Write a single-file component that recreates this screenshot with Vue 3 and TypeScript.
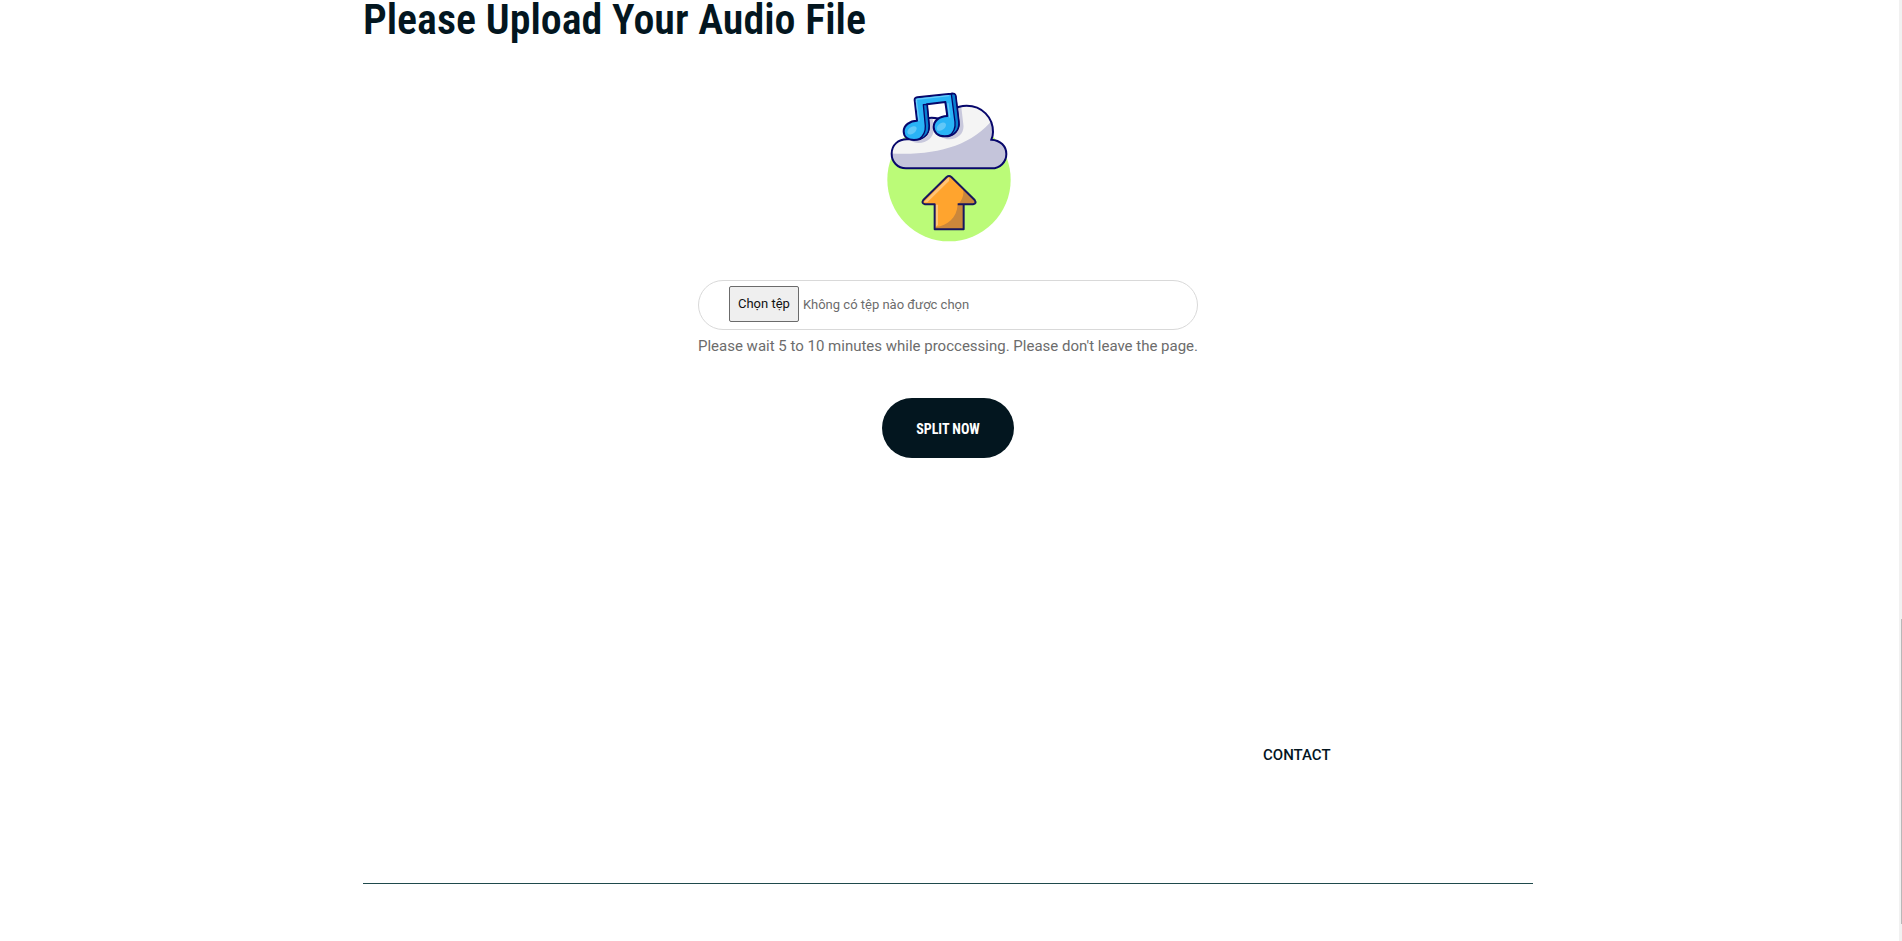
<script setup lang="ts">
import { ref } from 'vue'

const fileName = ref<string>('Không có tệp nào được chọn')

function onPick(event: Event): void {
  const input = event.target as HTMLInputElement
  fileName.value = input.files?.[0]?.name ?? 'Không có tệp nào được chọn'
}
</script>

<template>
  <div class="page">
    <div class="content">
      <main class="container upload">
        <h1 class="title">Please Upload Your Audio File</h1>
        <form class="form" @submit.prevent>
          <svg class="art" viewBox="-6 0 480 510" aria-hidden="true">
            <circle cx="237" cy="299" r="185" fill="#bbfb78" />
            <clipPath id="cloud">
              <path d="M108 265 C82 265 65 245 65 221 C65 194 85 178 111 178 L114 178 C116 142 147 113 185 113 C198 113 211 116 222 122 C232 95 259 77 290 77 C336 77 369 112 369 156 Q369 167 364 179 C391 180 409 199 409 222 C409 246 390 265 365 265 Z" />
            </clipPath>
            <g clip-path="url(#cloud)">
              <rect x="60" y="70" width="360" height="200" fill="#f4f4f4" />
              <path d="M60 220 C190 228 305 200 369 117 L420 180 V270 H60Z" fill="#c4c4da" />
              <path transform="translate(14 9)" d="M134 60 Q134 54 142 52 L243 41 Q256 39 257 48 L266 124 C270 149 252 169 224 169 C204 169 191 157 191 141 C191 123 207 109 232 108 L226 66 L171 73 L177 137 C178 163 157 180 132 180 C112 180 101 169 101 154 C101 137 119 122 141 122 Z" fill="#c8c8dc" />
            </g>
            <path d="M108 265 C82 265 65 245 65 221 C65 194 85 178 111 178 L114 178 C116 142 147 113 185 113 C198 113 211 116 222 122 C232 95 259 77 290 77 C336 77 369 112 369 156 Q369 167 364 179 C391 180 409 199 409 222 C409 246 390 265 365 265 Z" fill="none" stroke="#07076b" stroke-width="6" />
            <g stroke="#07076b" stroke-width="6" stroke-linejoin="round">
              <path d="M134 60 Q134 54 142 52 L243 41 Q256 39 257 48 L266 124 C270 149 252 169 224 169 C204 169 191 157 191 141 C191 123 207 109 232 108 L226 66 L171 73 L177 137 C178 163 157 180 132 180 C112 180 101 169 101 154 C101 137 119 122 141 122 Z" fill="#29b3f6" />
              <path d="M244 42 Q256 39 257 48 L266 124 C269 148 255 164 237 168 C250 159 257 145 255 126Z" fill="#087ed0" stroke-width="4" />
              <path d="M160 74 L171 73 L177 137 C178 160 165 174 147 178 C160 168 167 155 166 138Z" fill="#087ed0" stroke-width="4" />
            </g>
            <path d="M140 66 L139 58 L236 47 M139 64 L147 121 M234 71 L239 111" fill="none" stroke="#6acbf9" stroke-width="4" stroke-linecap="round" />
            <ellipse cx="126" cy="151" rx="16" ry="10" transform="rotate(-38 126 151)" fill="#62c8f8" />
            <ellipse cx="214" cy="140" rx="16" ry="10" transform="rotate(-38 214 140)" fill="#62c8f8" />
            <clipPath id="arrow">
              <path d="M230 291 Q237 285 244 291 L314 360 Q321 371 309 373 L281 373 L281 448 L194 448 L194 373 L165 373 Q153 370 160 360Z" />
            </clipPath>
            <g clip-path="url(#arrow)">
              <rect x="150" y="280" width="180" height="180" fill="#ffa42e" />
              <path d="M277 315 C285 342 278 360 263 374 C260 414 233 436 198 441 V455 H290 V378 H330Z" fill="#cb873b" />
              <path d="M237 290 L161 367 H172 L237 303Z" fill="#ffc477" />
              <path d="M194 374 H204 V435 L194 443Z" fill="#ffc477" />
            </g>
            <path d="M230 291 Q237 285 244 291 L314 360 Q321 371 309 373 L281 373 L281 448 L194 448 L194 373 L165 373 Q153 370 160 360Z M263 373H281" fill="none" stroke="#17175e" stroke-width="6" stroke-linejoin="round" />
          </svg>
          <label class="picker" for="audio">
            <input id="audio" class="picker-input" type="file" accept="audio/*" @change="onPick" />
            <span class="picker-button">Chọn tệp</span>
            <span class="picker-name">{{ fileName }}</span>
          </label>
          <p class="hint">Please wait 5 to 10 minutes while proccessing. Please don't leave the page.</p>
          <button class="submit" type="submit">SPLIT NOW</button>
        </form>
      </main>
      <footer class="container footer">
        <a class="contact" href="#contact">CONTACT</a>
      </footer>
    </div>
    <div class="scroll-track" aria-hidden="true">
      <div class="scroll-thumb"></div>
    </div>
  </div>
</template>

<style>
body {
  margin: 0;
  background: #fff;
}
</style>

<style scoped>
.page {
  display: flex;
  min-height: 100vh;
  font-family: Roboto, "Noto Sans", sans-serif;
  color: #6c6c6c;
}
.content {
  flex: 1;
  min-width: 0;
}
.container {
  max-width: 1170px;
  margin: 0 auto;
}
.title {
  margin: 0;
  font-family: "Roboto Condensed", Roboto, sans-serif;
  font-size: 42px;
  line-height: 40px;
  font-weight: 600;
  color: #03161f;
}
.form {
  display: flex;
  flex-direction: column;
  align-items: center;
  padding-top: 40px;
}
.art {
  width: 160px;
  height: 170px;
}
.picker {
  display: flex;
  align-items: center;
  gap: 4px;
  box-sizing: border-box;
  width: 500px;
  max-width: 100%;
  height: 50px;
  margin-top: 30px;
  padding: 0 30px 2px;
  border: 1px solid #d9d9d9;
  border-radius: 25px;
  font-size: 13px;
  cursor: pointer;
}
.picker:focus-within {
  border-color: #03161f;
}
.picker-input {
  position: absolute;
  width: 1px;
  height: 1px;
  opacity: 0;
}
.picker-button {
  padding: 0 8px;
  border: 1px solid #6b6b6b;
  border-radius: 2px;
  background: #efefef;
  color: #111;
  line-height: 34px;
}
.hint {
  margin: 4px 0 0;
  font-size: 15px;
  line-height: 24px;
}
.submit {
  height: 60px;
  margin-top: 40px;
  padding: 1px 34px 0;
  border: 0;
  border-radius: 30px;
  background: #03161f;
  color: #fff;
  font-family: "Roboto Condensed", Roboto, sans-serif;
  font-size: 14px;
  font-weight: 700;
}
.footer {
  display: grid;
  grid-template-columns: 900px 1fr;
  margin-top: 284px;
  padding-bottom: 114px;
  border-bottom: 1px solid #1f4a4c;
}
.contact {
  grid-column: 2;
  justify-self: start;
  color: #03161f;
  font-size: 15px;
  line-height: 27px;
  font-weight: 500;
  text-decoration: none;
}
.scroll-track {
  display: flex;
  flex-direction: column;
  align-items: flex-end;
  justify-content: flex-end;
  box-sizing: border-box;
  width: 3px;
  margin-left: 3px;
  padding-bottom: 17px;
  background: #f1f1f1;
}
.scroll-thumb {
  width: 1px;
  height: 305px;
  background: #b8b8b8;
}
</style>
